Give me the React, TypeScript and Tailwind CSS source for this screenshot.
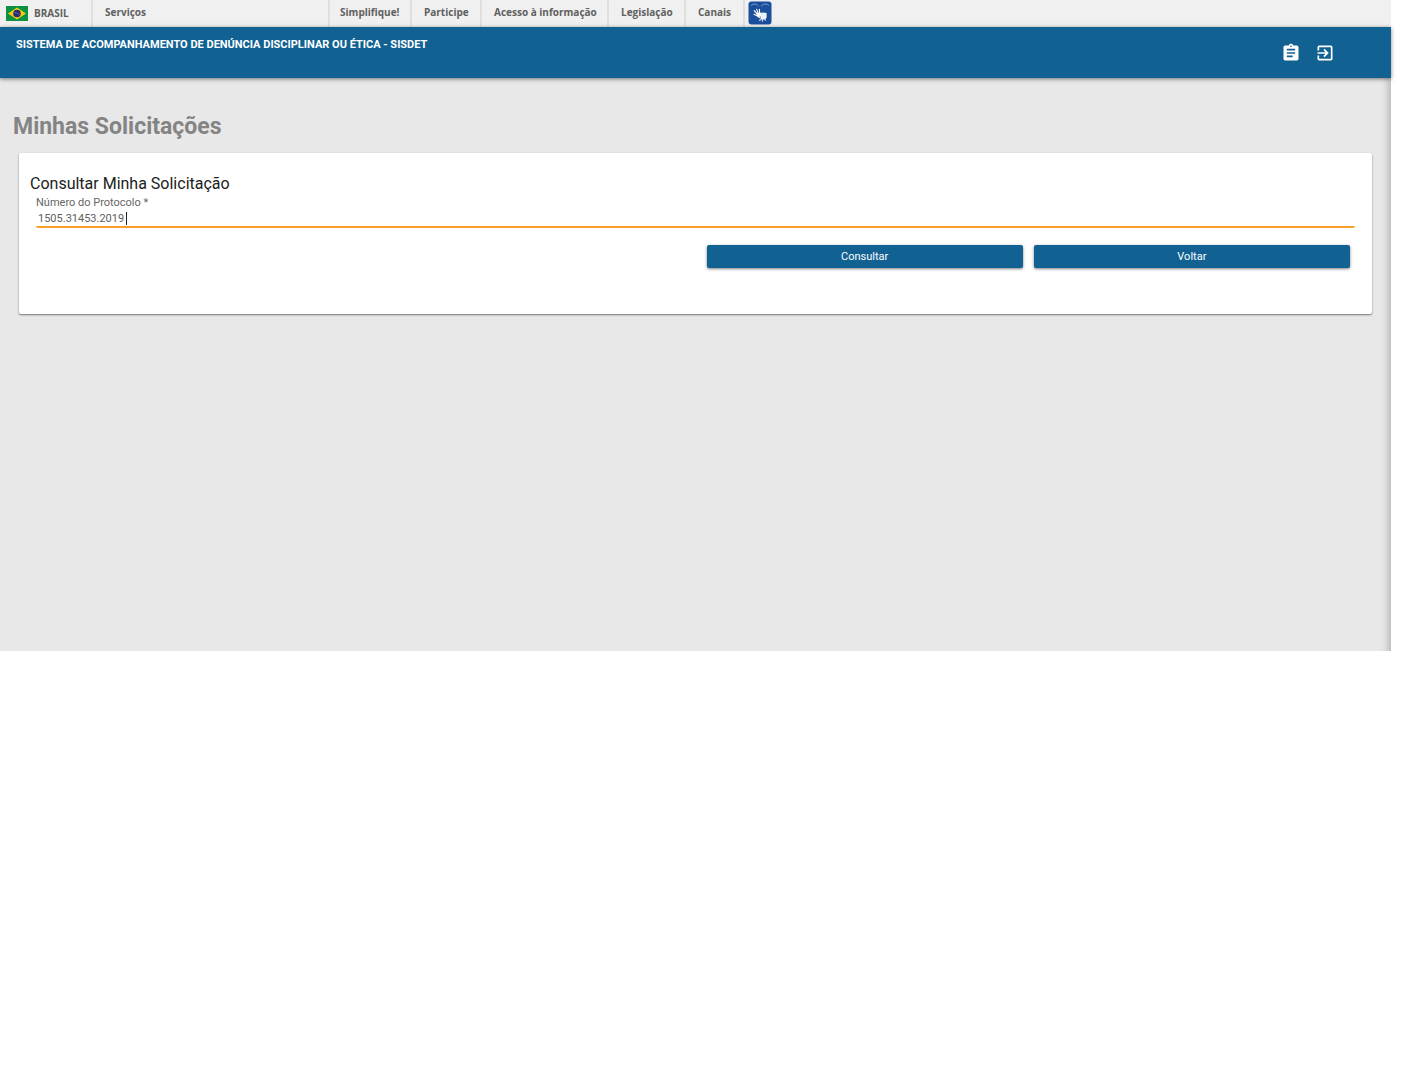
import React, { useState } from 'react'
import { MdAssignment, MdExitToApp } from 'react-icons/md'

const Flag: React.FC = () => (
  <svg viewBox="0 0 22 15" className="w-[22px] h-[15px] shrink-0" aria-hidden="true">
    <rect width="22" height="15" fill="#0a9242" />
    <path d="M11 1.5 20 7.5 11 13.5 2 7.5Z" fill="#f5cb12" />
    <circle cx="11" cy="7.5" r="3.8" fill="#2b2a72" />
    <path d="M7.4 6.6Q11.4 6.2 14.4 9.1" stroke="#8d93b4" strokeWidth=".5" fill="none" />
  </svg>
)

const Hands: React.FC = () => (
  <svg viewBox="0 0 24 24" className="w-6 h-6" aria-hidden="true">
    <rect x=".5" y=".5" width="23" height="23" rx="3" fill="#1b4f9b" />
    <path
      d="M3 4.4Q5.5 2 8.5 3.4L10.5 5.2M21 4.4Q18.5 2 15.5 3.4L13 5.2"
      stroke="#7fa3d0"
      strokeWidth=".9"
      fill="none"
    />
    <path
      d="M6.2 9.6 9.4 13M8.6 8.2 10.4 12.6M11.4 8.4 11.6 12.8M6 13.3 9.5 15"
      stroke="#fff"
      strokeWidth="1.1"
      strokeLinecap="round"
      fill="none"
    />
    <path d="M8.8 11.8 13.4 11.6 13.6 16 11 17 8.4 14.8Z" fill="#fff" />
    <path d="M12 13.2 14.6 11.6 18.6 12 18.6 16.6 17.2 18.6 13 18.6Z" fill="#eef4fb" />
    <path
      d="M12.4 18 11.8 19.6M14.6 18.4 14.4 20.2M17 17.8 17.4 19.2"
      stroke="#dce8f6"
      strokeWidth="1.1"
      strokeLinecap="round"
    />
    <path d="M11.4 15 13 15.8" stroke="#1b4f9b" strokeWidth=".4" />
  </svg>
)

const barLink = 'flex items-center border-l-2 border-[#dfdfdf] pb-[2px]'

const GovBar: React.FC = () => (
  <nav className="flex h-[27px] bg-[#f0f0f0] font-['Open_Sans',sans-serif] text-[10px] font-bold text-[#606060]">
    <a href="#brasil" className="flex w-[91px] items-center gap-[6px] pl-[6px]">
      <Flag />
      BRASIL
    </a>
    <a href="#servicos" className={`${barLink} w-[237px] pl-3`}>Serviços</a>
    <a href="#simplifique" className={`${barLink} w-[82px] pl-[10px]`}>Simplifique!</a>
    <a href="#participe" className={`${barLink} w-[70px] pl-3`}>Participe</a>
    <a href="#acesso" className={`${barLink} w-[127px] pl-3`}>Acesso à informação</a>
    <a href="#legislacao" className={`${barLink} w-[77px] pl-3`}>Legislação</a>
    <a href="#canais" className={`${barLink} w-[59px] pl-3`}>Canais</a>
    <a href="#vlibras" aria-label="VLibras" className={`${barLink} pl-[3px]`}>
      <Hands />
    </a>
  </nav>
)

const Header: React.FC = () => (
  <header className="relative flex h-[51px] items-center justify-between bg-[#116292] pl-4 pr-14 text-white shadow-[0_1px_4px_rgba(0,0,0,0.5)]">
    <h2 className="self-start pt-[10px] text-[11px] leading-4 font-bold">
      SISTEMA DE ACOMPANHAMENTO DE DENÚNCIA DISCIPLINAR OU ÉTICA - SISDET
    </h2>
    <div className="flex gap-[14px]">
      <button type="button" aria-label="Solicitações">
        <MdAssignment size={20} />
      </button>
      <button type="button" aria-label="Sair">
        <MdExitToApp size={20} />
      </button>
    </div>
  </header>
)

const actionButton =
  'h-[23px] flex-1 rounded-[2px] bg-[#116292] pt-px text-[11px] text-white shadow-[0_1px_3px_rgba(0,0,0,0.5)]'

export default function App() {
  const [protocol, setProtocol] = useState('1505.31453.2019')

  return (
    <div className="min-h-screen bg-white font-[Roboto,sans-serif]">
      <div className="mr-[27px]">
        <GovBar />
        <Header />
        <main className="min-h-[573px] bg-[#e8e8e8] px-[19px] pt-[33px] shadow-[inset_-10px_0_8px_-8px_rgba(0,0,0,0.25)]">
          <h1 className="-ml-[6px] text-[23px] leading-8 font-bold text-[#848484]">Minhas Solicitações</h1>
          <form
            className="mt-[10px] rounded-[2px] bg-white px-[11px] pt-5 pb-[46px] shadow-[0_1px_2px_rgba(0,0,0,0.5)]"
            onSubmit={(e) => e.preventDefault()}
          >
            <h3 className="text-[16px] leading-[22px] text-[#212121]">Consultar Minha Solicitação</h3>
            <div className="mx-[6px]">
              <label htmlFor="protocol" className="block text-[11px] leading-4 text-[#666]">
                Número do Protocolo *
              </label>
              <div className="relative">
                <input
                  id="protocol"
                  type="text"
                  value={protocol}
                  onChange={(e) => setProtocol(e.target.value)}
                  className="block h-[17px] w-full rounded-[2px] border-b-2 border-[#f9a22b] pl-[2px] text-[11px] text-[#606060] outline-none"
                />
                {/* text cursor */}
                <span className="absolute top-px left-[90px] h-[13px] w-px bg-[#222]" />
              </div>
            </div>
            <div className="mt-[17px] ml-auto flex w-1/2 gap-[11px] px-[11px]">
              <button type="submit" className={actionButton}>Consultar</button>
              <button type="button" className={actionButton}>Voltar</button>
            </div>
          </form>
        </main>
      </div>
    </div>
  )
}
